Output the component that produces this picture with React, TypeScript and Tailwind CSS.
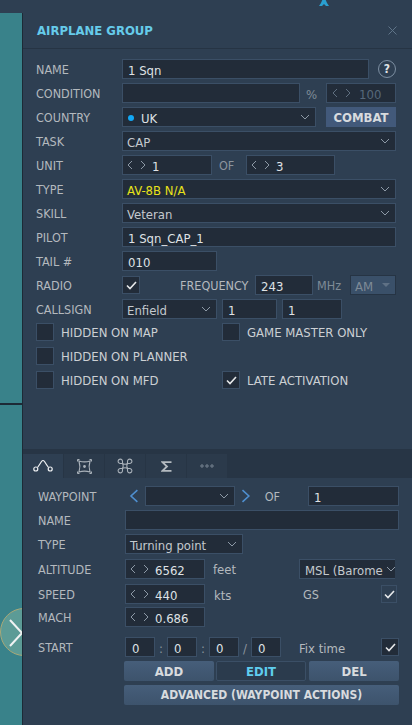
import type { ReactNode } from "react";

const Chevron = ({ className = "" }: { className?: string }) => (
  <svg width="10" height="6" viewBox="0 0 10 6" fill="none" stroke="#8d99a6" strokeWidth="1" className={className}>
    <path d="M1 1l4 4 4-4" />
  </svg>
);

const Arrows = ({ dim = false }: { dim?: boolean }) => (
  <svg width="19" height="10" viewBox="0 0 19 10" fill="none" stroke={dim ? "#5f6f80" : "#8d99a6"} strokeWidth="1" className="shrink-0 -mt-[2px]">
    <path d="M5 1L1 5l4 4M14 1l4 4-4 4" />
  </svg>
);

const Check = () => (
  <svg width="11" height="9" viewBox="0 0 11 9" fill="none" stroke="#e6e8ea" strokeWidth="1.6">
    <path d="M1 4.5l3 3 6-6.5" />
  </svg>
);

function Row({ label, children, className = "", labelClass = "w-[86px]" }: { label?: string; children: ReactNode; className?: string; labelClass?: string }) {
  return (
    <div className={`flex items-center h-5 ${className}`}>
      <span className={`shrink-0 pt-[2px] text-[12.5px] text-[#b4b9be] ${labelClass}`}>{label}</span>
      {children}
    </div>
  );
}

function Box({ children, className = "" }: { children?: ReactNode; className?: string }) {
  return (
    <div className={`flex items-center h-5 shrink-0 pt-[2px] bg-[#222c39] border border-[#3b4f66] text-[13px] ${className}`}>
      {children}
    </div>
  );
}

function Select({ value, className = "", valueClass = "text-[#c4c9ce]" }: { value?: string; className?: string; valueClass?: string }) {
  return (
    <Box className={`justify-between pl-[4px] pr-[5px] ${className}`}>
      <span className={valueClass}>{value}</span>
      <Chevron className="-mt-[2px]" />
    </Box>
  );
}

function Stepper({ value, className = "" }: { value: string; className?: string }) {
  return (
    <Box className={`pl-[4px] gap-[6px] text-[#dfe2e5] ${className}`}>
      <Arrows />
      <span>{value}</span>
    </Box>
  );
}

function CheckBox({ checked = false, className = "" }: { checked?: boolean; className?: string }) {
  return (
    <div className={`flex items-center justify-center shrink-0 w-[18px] h-[18px] bg-[#222c39] border border-[#3b4f66] ${className}`}>
      {checked && <Check />}
    </div>
  );
}

function Flag({ label, checked = false, className = "" }: { label: string; checked?: boolean; className?: string }) {
  return (
    <div className={`flex items-center gap-[7px] h-[18px] ${className}`}>
      <CheckBox checked={checked} />
      <span className="text-[13px] text-[#ccd0d4]">{label}</span>
    </div>
  );
}

function ActionButton({ children, className = "" }: { children: ReactNode; className?: string }) {
  return (
    <div className={`flex items-center justify-center h-5 rounded-[2px] bg-gradient-to-b from-[#465e7a] to-[#3d536c] font-bold text-[#d8dbde] ${className}`}>
      {children}
    </div>
  );
}

function Tab({ children, active = false }: { children: ReactNode; active?: boolean }) {
  return (
    <div className={`flex items-center justify-center w-10 h-6 ${active ? "bg-[#2e3f52]" : "bg-[#2b3a4b]"}`}>{children}</div>
  );
}

export default function App() {
  return (
    <div className="w-[412px] h-[725px] overflow-hidden flex flex-col bg-[#2e3f52] font-['DejaVu_Sans_Condensed','DejaVu_Sans',sans-serif] leading-none">
      <div className="h-[13px] shrink-0 pl-[319px]">
        <svg width="10" height="6" viewBox="0 0 10 6" fill="#2a9fd0">
          <path d="M5-4L8 3l2 3H7L5 4 3 6H0l2-3z" />
        </svg>
      </div>

      <div className="flex flex-1 min-h-0">
        {/* map strip */}
        <div className="relative w-[23px] shrink-0 bg-[#39828a] border-r border-[#1d2a36] overflow-hidden">
          <div className="absolute left-0 top-[390px] w-full h-[2px] bg-[#1d2a36]" />
          <div className="absolute left-0 top-[595px] w-12 h-12 rounded-full bg-[#5c9b96] border border-[#a8a878]" />
          <svg width="14" height="28" viewBox="0 0 14 28" fill="none" stroke="#f0f2f2" strokeWidth="2" className="absolute left-[9px] top-[606px]">
            <path d="M1 1l12 13L1 27" />
          </svg>
        </div>

        <div className="flex-1 flex flex-col min-w-0">
          {/* title */}
          <div className="flex items-center justify-between h-[36px] shrink-0 pl-[14px] pr-[15px] border-b border-[#263444]">
            <span className="text-[13px] font-bold text-[#66cbea]">AIRPLANE GROUP</span>
            <svg width="9" height="9" viewBox="0 0 9 9" fill="none" stroke="#5f7488" strokeWidth="1">
              <path d="M.5.5l8 8M8.5.5l-8 8" />
            </svg>
          </div>

          {/* group form */}
          <div className="flex flex-col gap-1 pl-[13px] pr-[16px] pt-[10px]">
            <Row label="NAME">
              <Box className="w-[247px] pl-[5px] text-[#dfe2e5]">1 Sqn</Box>
              <div className="ml-[9px] flex items-center justify-center w-[18px] h-[18px] rounded-full border border-[#7d8fa2] text-[12px] font-bold text-[#e0e3e6]">?</div>
            </Row>
            <Row label="CONDITION">
              <Box className="w-[178px]" />
              <span className="ml-[6px] w-[20px] pt-[2px] text-[13px] text-[#7f8b97]">%</span>
              <Box className="w-[70px] pl-[5px] gap-[8px] text-[#56687a]">
                <Arrows dim />
                <span>100</span>
              </Box>
            </Row>
            <Row label="COUNTRY">
              <Box className="w-[194px] justify-between pl-[5px] pr-[5px] text-[#dfe2e5]">
                <span className="flex items-center gap-[7px]">
                  <span className="w-[6px] h-[6px] rounded-full bg-[#12a8f5]" />
                  <span>UK</span>
                </span>
                <Chevron className="-mt-[2px]" />
              </Box>
              <div className="ml-[10px] pt-px flex items-center justify-center w-[70px] h-5 bg-[#42597a] text-[13px] font-bold text-[#d8dbde]">COMBAT</div>
            </Row>
            <Row label="TASK">
              <Select value="CAP" className="w-[274px]" />
            </Row>
            <Row label="UNIT">
              <Stepper value="1" className="w-[90px]" />
              <span className="ml-[7px] w-[27px] pt-[2px] text-[12.5px] text-[#8b949d]">OF</span>
              <Stepper value="3" className="w-[89px]" />
            </Row>
            <Row label="TYPE">
              <Select value="AV-8B N/A" className="w-[274px]" valueClass="text-[#e8e21a]" />
            </Row>
            <Row label="SKILL">
              <Select value="Veteran" className="w-[274px]" />
            </Row>
            <Row label="PILOT">
              <Box className="w-[274px] pl-[5px] text-[#dfe2e5]">1 Sqn_CAP_1</Box>
            </Row>
            <Row label="TAIL #">
              <Box className="w-[95px] pl-[5px] text-[#dfe2e5]">010</Box>
            </Row>
            <Row label="RADIO">
              <CheckBox checked />
              <span className="ml-[40px] w-[75px] pt-[2px] text-[12.5px] text-[#b4b9be]">FREQUENCY</span>
              <Box className="w-[58px] pl-[5px] text-[#dfe2e5]">243</Box>
              <span className="ml-[4px] w-[33px] pt-[2px] text-[12.5px] text-[#7f8b97]">MHz</span>
              <div className="flex items-center justify-between w-[46px] h-5 pt-[2px] pl-[4px] pr-[5px] bg-[#3a5069] border border-[#263444] text-[13px] text-[#7f8b97]">
                <span>AM</span>
                <span className="-mt-[2px] w-0 h-0 border-x-[4px] border-x-transparent border-t-[4px] border-t-[#5f7185]" />
              </div>
            </Row>
            <Row label="CALLSIGN">
              <Select value="Enfield" className="w-[95px]" />
              <Box className="ml-[5px] w-[55px] pl-[5px] text-[#dfe2e5]">1</Box>
              <Box className="ml-[5px] w-[60px] pl-[5px] text-[#dfe2e5]">1</Box>
            </Row>
          </div>

          {/* flags */}
          <div className="flex flex-col gap-[6px] pl-[13px] pt-[4px]">
            <div className="flex">
              <Flag label="HIDDEN ON MAP" className="w-[186px]" />
              <Flag label="GAME MASTER ONLY" />
            </div>
            <Flag label="HIDDEN ON PLANNER" />
            <div className="flex">
              <Flag label="HIDDEN ON MFD" className="w-[186px]" />
              <Flag label="LATE ACTIVATION" checked />
            </div>
          </div>

          {/* waypoint tabs */}
          <div className="mt-[60px] h-[29px] shrink-0 pt-[5px] flex items-start gap-px bg-[#273545]">
            <Tab active>
              <svg width="20" height="14" viewBox="0 0 20 14" fill="none" stroke="#eef0f2" strokeWidth="1.2">
                <circle cx="2.8" cy="10" r="2" />
                <circle cx="17.2" cy="10" r="2" />
                <path d="M4.5 8.5Q7 5 8.5 2.5Q10 .5 11.5 2.5Q13 5 15.5 8.5" />
              </svg>
            </Tab>
            <Tab>
              <svg width="15" height="15" viewBox="0 0 15 15" fill="none" stroke="#aab2ba" strokeWidth="1.2">
                <path d="M2 2Q7.5 3.8 13 2Q11.2 7.5 13 13Q7.5 11.2 2 13Q3.8 7.5 2 2z" />
                <path d="M.5.5h2M.5.5v2M14.5.5h-2M14.5.5v2M.5 14.5h2M.5 14.5v-2M14.5 14.5h-2M14.5 14.5v-2" />
                <circle cx="7.5" cy="7.5" r=".8" fill="#aab2ba" />
              </svg>
            </Tab>
            <Tab>
              <svg width="16" height="16" viewBox="0 0 16 16" fill="none" stroke="#aab2ba" strokeWidth="1.1">
                <path d="M5.5 5.5Q8 7 10.5 5.5Q9 8 10.5 10.5Q8 9 5.5 10.5Q7 8 5.5 5.5zM5.5 5.5V3.5a2.2 2.2 0 1 0-2 2h2M10.5 5.5V3.5a2.2 2.2 0 1 1 2 2h-2M5.5 10.5v2a2.2 2.2 0 1 1-2-2h2M10.5 10.5v2a2.2 2.2 0 1 0 2-2h-2" />
              </svg>
            </Tab>
            <Tab>
              <svg width="11" height="11" viewBox="0 0 11 11" fill="none" stroke="#b4bac0" strokeWidth="1.8">
                <path d="M10.5 1.2H1.5L6 5.5 1.5 9.8h9" />
              </svg>
            </Tab>
            <Tab>
              <svg width="14" height="4" viewBox="0 0 14 4" fill="none" stroke="#8d99a6" strokeWidth=".8">
                <circle cx="2" cy="2" r="1.2" />
                <circle cx="7" cy="2" r="1.2" />
                <circle cx="12" cy="2" r="1.2" />
              </svg>
            </Tab>
          </div>

          {/* waypoint form */}
          <div className="flex flex-col pl-[15px] pr-[13px] pt-[8px]">
            <Row label="WAYPOINT" labelClass="w-[87px]">
              <svg width="10" height="14" viewBox="0 0 10 14" fill="none" stroke="#4f8fcf" strokeWidth="1.6" className="ml-[4px]">
                <path d="M8.5 1L2 7l6.5 6" />
              </svg>
              <Select className="ml-[6px] w-[90px]" />
              <svg width="10" height="14" viewBox="0 0 10 14" fill="none" stroke="#4f8fcf" strokeWidth="1.6" className="ml-[6px]">
                <path d="M1.5 1L8 7l-6.5 6" />
              </svg>
              <span className="ml-[14px] w-[44px] pt-[2px] text-[12.5px] text-[#b4b9be]">OF</span>
              <Box className="w-[91px] pl-[5px] text-[#dfe2e5]">1</Box>
            </Row>
            <Row label="NAME" labelClass="w-[87px]" className="mt-1">
              <Box className="w-[274px]" />
            </Row>
            <Row label="TYPE" labelClass="w-[87px]" className="mt-1">
              <Select value="Turning point" className="w-[118px]" />
            </Row>
            <Row label="ALTITUDE" labelClass="w-[87px]" className="mt-[5px]">
              <Stepper value="6562" className="w-[80px]" />
              <span className="ml-[8px] w-[86px] text-[13px] text-[#b4b9be]">feet</span>
              <Box className="w-[96px] border-r-0 pl-[5px] gap-[3px] text-[#c4c9ce] whitespace-nowrap overflow-hidden">
                MSL (Barome
                <Chevron className="shrink-0 -mt-[2px]" />
              </Box>
            </Row>
            <Row label="SPEED" labelClass="w-[87px]" className="mt-[5px]">
              <Stepper value="440" className="w-[80px]" />
              <span className="ml-[9px] w-[89px] pt-[2px] text-[13px] text-[#b4b9be]">kts</span>
              <span className="w-[78px] pt-[2px] text-[12.5px] text-[#b4b9be]">GS</span>
              <CheckBox checked className="!w-[16px] !bg-transparent" />
            </Row>
            <Row label="MACH" labelClass="w-[87px]" className="mt-[3px]">
              <Stepper value="0.686" className="w-[80px]" />
            </Row>
            <Row label="START" labelClass="w-[87px]" className="mt-[10px]">
              <Box className="w-[30px] pl-[6px] text-[#dfe2e5]">0</Box>
              <span className="w-3 pt-[2px] text-center text-[13px] text-[#8b949d]">:</span>
              <Box className="w-[30px] pl-[6px] text-[#dfe2e5]">0</Box>
              <span className="w-3 pt-[2px] text-center text-[13px] text-[#8b949d]">:</span>
              <Box className="w-[30px] pl-[6px] text-[#dfe2e5]">0</Box>
              <span className="w-3 pt-[2px] text-center text-[13px] text-[#8b949d]">/</span>
              <Box className="w-[30px] pl-[6px] text-[#dfe2e5]">0</Box>
              <span className="ml-[18px] w-[82px] pt-[2px] text-[13px] text-[#b4b9be]">Fix time</span>
              <CheckBox checked />
            </Row>
            <div className="ml-[86px] mt-1 flex gap-[2px]">
              <ActionButton className="w-[90px] text-[13px]">ADD</ActionButton>
              <div className="flex items-center justify-center w-[90px] h-5 rounded-[2px] border border-[#3b4f66] bg-[#2b3b4d] text-[13px] font-bold text-[#5fcdee]">EDIT</div>
              <ActionButton className="ml-px w-[90px] text-[13px]">DEL</ActionButton>
            </div>
            <ActionButton className="ml-[86px] mt-1 w-[275px] text-[12px]">ADVANCED (WAYPOINT ACTIONS)</ActionButton>
          </div>
        </div>
      </div>
    </div>
  );
}
